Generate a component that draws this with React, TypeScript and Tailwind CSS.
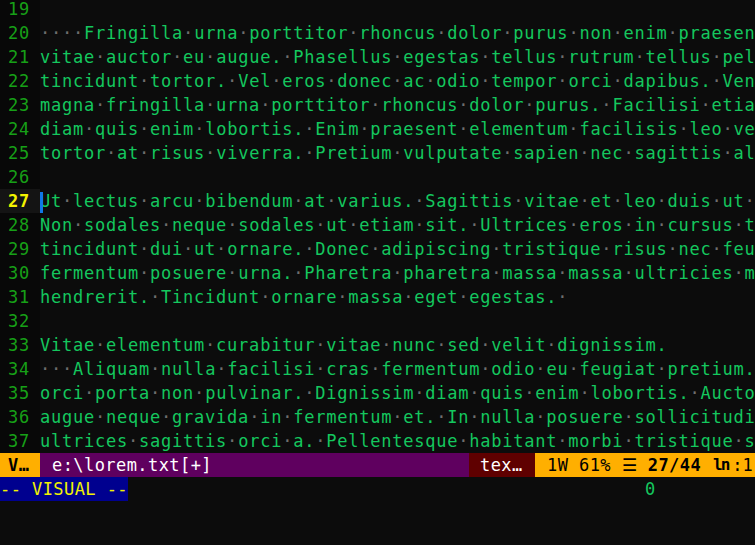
import React from 'react'

const lines: [number, string][] = [
  [19, ''],
  [20, '    Fringilla urna porttitor rhoncus dolor purus non enim praesent elementum facilisis leo'],
  [21, 'vitae auctor eu augue. Phasellus egestas tellus rutrum tellus pellentesque eu tincidunt'],
  [22, 'tincidunt tortor. Vel eros donec ac odio tempor orci dapibus. Venenatis lectus magna'],
  [23, 'magna fringilla urna porttitor rhoncus dolor purus. Facilisi etiam dignissim diam quis'],
  [24, 'diam quis enim lobortis. Enim praesent elementum facilisis leo vel fringilla est'],
  [25, 'tortor at risus viverra. Pretium vulputate sapien nec sagittis aliquam malesuada'],
  [26, ''],
  [27, 'Ut lectus arcu bibendum at varius. Sagittis vitae et leo duis ut diam quam nulla'],
  [28, 'Non sodales neque sodales ut etiam sit. Ultrices eros in cursus turpis massa'],
  [29, 'tincidunt dui ut ornare. Donec adipiscing tristique risus nec feugiat in fermentum'],
  [30, 'fermentum posuere urna. Pharetra pharetra massa massa ultricies mi quis hendrerit'],
  [31, 'hendrerit. Tincidunt ornare massa eget egestas. '],
  [32, ''],
  [33, 'Vitae elementum curabitur vitae nunc sed velit dignissim.'],
  [34, '   Aliquam nulla facilisi cras fermentum odio eu feugiat pretium. Nibh ipsum'],
  [35, 'orci porta non pulvinar. Dignissim diam quis enim lobortis. Auctor urna nunc id'],
  [36, 'augue neque gravida in fermentum et. In nulla posuere sollicitudin aliquam'],
  [37, 'ultrices sagittis orci a. Pellentesque habitant morbi tristique senectus et netus'],
]

const Dotted = ({ text }: { text: string }) => (
  <>
    {text.split(/( )/).map((part, i) =>
      part === ' ' ? (
        <span key={i} className="text-[#6e6e6e]">·</span>
      ) : (
        <span key={i}>{part}</span>
      )
    )}
  </>
)

const Row = ({ n, text }: { n: number; text: string }) => {
  const current = n === 27
  return (
    <div className="flex h-[24px]">
      <div
        className={
          current
            ? 'w-[40px] shrink-0 pr-[10px] text-right font-bold text-[#f2f200] bg-[#141414]'
            : 'w-[40px] shrink-0 pr-[10px] text-right text-[#17a017] bg-[#080808]'
        }
      >
        {n}
      </div>
      <div className="flex-1 overflow-hidden whitespace-pre text-[#14c75e]">
        {current ? (
          <>
            <span className="relative">
              <span className="absolute left-0 top-[1px] h-[22px] w-[3px] bg-[#1078e6]" />
              U
            </span>
            <Dotted text={text.slice(1)} />
          </>
        ) : (
          <Dotted text={text} />
        )}
      </div>
    </div>
  )
}

export default function App() {
  return (
    <div className="h-[545px] w-[755px] overflow-hidden bg-[#0c0c0c] text-[17px] leading-[24px] [font-family:'DejaVu_Sans_Mono',monospace]">
      <div className="mt-[-3px] tracking-[0.77px]">
        {lines.map(([n, t]) => (
          <Row key={n} n={n} text={t} />
        ))}
      </div>

      {/* statusline */}
      <div className="flex h-[24px] whitespace-pre tracking-[0.43px]">
        <div className="w-[40px] shrink-0 bg-[#ffaf00] pl-[8px] font-bold text-black">V…</div>
        <div className="flex-1 bg-[#5f005f] pl-[12px] text-white">e:\lorem.txt[+]</div>
        <div className="w-[66px] shrink-0 bg-[#5f0000] pl-[11px] text-white">tex…</div>
        <div className="flex w-[220px] shrink-0 overflow-hidden bg-[#ffaf00] pl-[12px] text-black">
          <span>1W 61% ☰ </span>
          <span className="font-bold">27/44</span>
          <span className="ml-[12px] text-[16px] font-bold tracking-[-2px]">ln</span>
          <span className="ml-[4px] tracking-[0px]">:1</span>
        </div>
      </div>

      {/* command line */}
      <div className="flex h-[24px] whitespace-pre tracking-[0.43px]">
        <div className="w-[128px] shrink-0 bg-[#00008f] text-[#f2f200]">-- VISUAL --</div>
        <div className="ml-[517px] text-[#14c75e]">0</div>
      </div>
    </div>
  )
}
